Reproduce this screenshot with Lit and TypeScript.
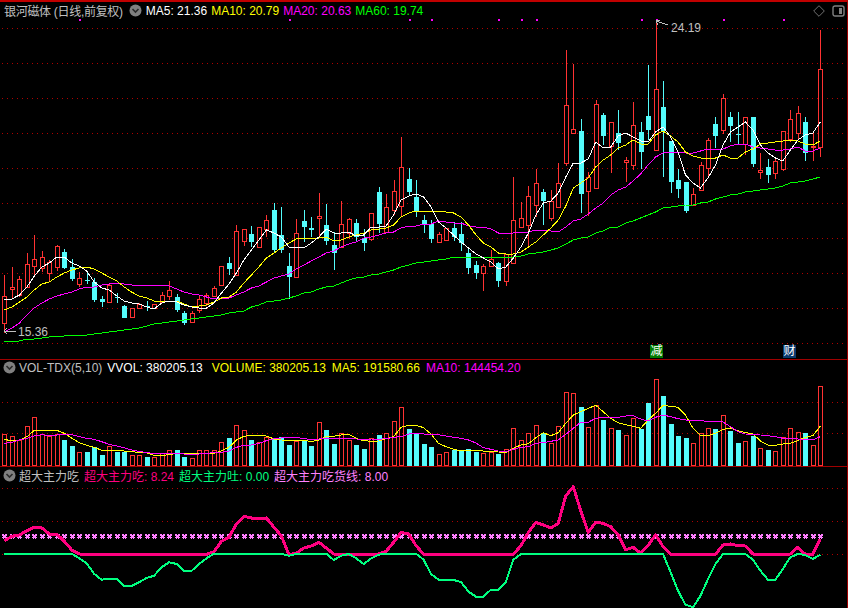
import { LitElement, html, css, svg } from 'lit';
import { customElement } from 'lit/decorators.js';

// [high, bodyTop, bodyBottom, low, up] in screen pixels
const candles: number[][] = [
  [275,296,323,333,1],[267,287,289,299,1],[276,279,295,297,1],[253,264,287,287,1],[235,259,266,277,1],
  [251,257,268,272,1],[260,262,273,282,1],[245,246,267,271,1],[249,252,268,269,0],[259,267,279,281,0],
  [272,278,284,287,1],[273,280,281,284,0],[278,282,300,302,0],[296,299,302,307,0],[284,285,302,302,1],
  [293,297,298,303,0],[305,306,318,318,0],[308,308,317,317,1],[303,304,308,309,1],[301,306,307,311,0],
  [304,304,308,309,1],[292,295,302,303,1],[281,290,296,300,1],[294,297,310,312,0],[311,313,323,325,0],
  [311,313,322,322,1],[295,299,310,313,1],[293,295,303,306,1],[286,288,296,297,1],[266,266,285,285,1],
  [257,263,269,275,0],[225,231,275,275,1],[229,229,241,246,1],[226,234,242,247,0],[227,227,247,247,1],
  [215,220,229,237,1],[203,210,250,253,0],[207,235,250,253,0],[253,266,277,299,0],[219,233,277,278,1],
  [210,221,227,242,0],[217,228,230,237,0],[193,216,218,237,1],[204,225,241,245,0],[232,245,253,270,0],
  [201,224,247,247,1],[218,219,233,239,1],[219,223,237,241,0],[229,238,243,251,0],[213,213,239,241,1],
  [187,192,224,233,0],[194,207,232,232,1],[180,191,210,215,1],[137,167,206,216,1],[168,179,192,196,0],
  [180,197,212,217,0],[215,220,224,233,0],[220,224,239,243,0],[232,234,242,243,1],[228,228,240,240,1],
  [222,228,237,241,0],[222,234,243,251,0],[248,253,268,274,0],[261,265,273,279,0],[264,266,273,291,1],
  [250,259,266,266,1],[262,263,281,287,0],[254,254,281,286,1],[177,220,263,263,1],[202,218,227,228,1],
  [186,196,225,246,1],[169,183,205,217,1],[189,192,201,225,0],[190,201,218,221,1],[163,183,207,208,1],
  [50,105,163,166,1],[64,129,133,134,1],[119,131,194,213,0],[172,177,191,216,1],[100,104,188,188,1],
  [113,115,136,145,0],[122,122,146,173,1],[110,133,143,150,0],[157,160,162,182,1],[102,125,165,170,1],
  [122,132,152,169,0],[65,116,130,140,0],[20,89,150,150,1],[81,107,131,177,0],[141,141,182,193,0],
  [169,180,189,198,0],[182,182,211,213,0],[188,194,205,205,1],[162,165,190,190,1],[138,140,168,177,1],
  [117,124,136,148,0],[94,98,130,134,1],[112,117,126,142,0],[112,134,134,145,0],[117,117,144,155,1],
  [117,117,164,167,0],[153,170,172,179,1],[159,167,175,183,0],[158,161,173,179,1],[131,131,169,171,1],
  [110,119,139,142,1],[106,113,133,140,1],[117,122,153,161,0],[133,146,147,161,1],[30,69,147,157,1],
];

const ma5 = [299,299,295,287,276,267,263,257,257,263,266,271,282,288,290,296,301,303,304,307,309,303,301,302,305,307,308,308,303,293,284,273,260,250,240,230,233,237,
  247,247,248,243,237,229,233,233,232,236,235,227,227,226,215,200,196,194,197,207,222,228,235,242,248,254,258,262,269,267,258,247,233,215,203,201,193,177,
  163,163,159,142,148,147,136,133,137,141,142,132,127,137,152,175,183,188,178,165,145,132,127,122,130,145,153,158,161,150,140,135,133,122];
const ma10 = [310,307,302,297,290,284,282,277,273,270,268,267,269,273,277,281,287,292,296,298,301,302,301,301,304,307,306,305,302,298,297,292,283,275,267,258,253,248,
  243,239,238,238,238,237,241,240,237,235,233,230,229,228,225,217,213,211,211,211,211,212,213,217,225,235,243,247,253,254,254,252,247,242,235,228,220,206,
  188,183,178,167,160,155,148,145,140,144,144,135,131,136,142,152,156,158,158,158,155,158,158,152,149,144,143,142,141,140,141,144,145,141];
const ma20 = [332,328,323,315,308,303,299,296,294,292,289,287,287,285,284,283,284,285,285,285,285,285,286,289,292,294,295,297,299,298,298,295,292,288,286,282,278,276,
  274,269,265,261,257,253,251,247,244,242,238,237,235,233,232,228,226,226,224,224,221,222,223,223,226,227,227,229,233,233,233,232,232,230,230,231,232,227,
  221,219,214,208,203,195,190,187,181,174,165,157,153,152,152,153,153,151,149,150,149,146,144,144,147,148,149,150,150,149,147,151,151,148];
const ma60 = [341,341,341,339,339,338,337,336,336,335,335,335,334,333,332,331,330,329,328,326,324,323,322,321,320,319,318,317,316,315,313,312,311,307,305,302,301,300,
  298,296,293,292,289,287,286,283,280,278,277,275,274,272,270,267,265,263,262,261,260,259,257,257,257,257,257,257,257,257,257,256,254,253,252,250,248,244,
  240,238,237,233,231,227,227,223,221,218,215,212,208,207,206,205,205,203,202,199,197,195,194,192,191,190,189,188,186,183,182,181,179,177];

// volume panel, values read from the 3x crop: y = 340 + v / 3
const vol = [282,289,300,259,232,283,288,283,300,318,337,336,320,345,319,336,336,345,345,351,351,340,331,330,351,355,331,331,331,307,294,256,270,300,307,292,296,292,315,304,300,318,246,270,312,280,300,315,327,295,285,280,243,202,267,281,
  312,321,343,337,330,333,327,336,340,335,342,328,265,301,280,256,280,310,259,157,160,201,262,196,240,265,270,286,235,267,189,118,168,252,288,294,310,280,265,267,226,273,309,304,287,325,330,334,292,265,277,279,316,139];
const volMa5 = [298,303,300,290,271,271,271,271,280,295,308,316,322,331,331,331,333,335,337,338,346,348,343,341,341,342,341,341,340,332,322,300,289,286,286,288,297,300,301,301,301,305,300,289,289,285,283,295,302,304,303,296,290,262,256,256,
  263,282,310,320,328,332,333,331,333,333,336,338,325,315,311,293,278,287,278,250,225,215,205,196,215,235,248,254,259,265,240,220,196,199,202,225,265,287,287,280,268,264,272,278,281,303,315,316,312,310,302,292,287,259];
const volMa10 = [310,307,300,295,288,284,288,285,283,284,290,295,298,305,313,318,323,330,334,338,340,340,339,341,342,342,342,340,338,337,333,322,316,315,310,302,296,294,293,293,295,300,297,295,295,296,295,297,298,297,298,296,292,290,282,280,
  282,283,284,288,292,295,300,309,323,328,333,335,328,322,320,310,308,304,300,283,265,247,247,235,232,232,232,228,227,237,243,232,225,230,236,240,242,242,244,245,246,260,275,282,283,285,287,290,295,295,297,299,300,290];

// indicator panel: y = 464 + v / 3
const flat = (n: number, v: number) => Array(n).fill(v) as number[];
const pink = [230,217,213,200,189,192,210,210,232,258,270,...flat(17,271),263,232,220,180,157,162,165,162,190,215,272,268,252,246,235,252,270,...flat(5,271),270,262,235,205,210,245,
  271,...flat(12,271),245,205,175,183,192,178,95,68,140,205,175,178,188,213,257,250,268,245,212,248,...flat(7,271),243,240,245,246,270,...flat(4,271),270,250,271,271,225];
const mint = [...flat(10,269),283,298,330,347,344,344,366,366,355,342,335,310,295,300,321,321,300,283,...flat(10,269),275,270,...flat(4,269),288,275,270,283,300,283,272,...flat(5,269),
  287,330,347,348,348,354,383,398,398,377,377,354,287,270,...flat(18,269),270,325,380,422,430,395,345,300,270,270,269,270,287,320,347,347,315,280,270,273,285,272];

const dots = [79,289,409,431,498,521,536,641,656,723,783];
const cx = (i: number) => 4.4 + 7.485 * i;
const px = (i: number) => Math.round(cx(i));

@customElement('app-root')
export class AppRoot extends LitElement {
  static styles = css`
    :host {
      display: block;
      width: 848px;
      height: 608px;
      background: #000;
      font: 12px 'Liberation Sans', 'Noto Sans CJK SC', sans-serif;
      color: #c0c0c0;
      white-space: nowrap;
    }
    .chart {
      display: flex;
      flex-direction: column;
      height: 608px;
      box-sizing: border-box;
      border-top: 2px solid #c00000;
      border-right: 1px solid #a00000;
    }
    .panel {
      position: relative;
    }
    .price { height: 357px; border-bottom: 1px solid #a00000; }
    .volume { height: 106px; border-bottom: 1px solid #a00000; }
    .indicator { flex: 1; }
    svg.plot {
      display: block;
      width: 848px;
      height: 100%;
      shape-rendering: crispEdges;
    }
    .legend {
      position: absolute;
      top: 0;
      left: 0;
      display: flex;
      align-items: center;
    }
    .price .legend { height: 17px; padding-left: 4px; gap: 4px; }
    .volume .legend { height: 15px; padding-left: 3px; gap: 6px; }
    .indicator .legend { height: 17px; padding-left: 3px; gap: 5px; }
    .legend svg { display: block; flex: none; }
    .title { letter-spacing: -0.3px; margin-right: 2px; }
    .indicator .legend svg { margin-right: -2px; }
    .volume .legend svg { margin-right: -3px; }
    .vol-name { margin-right: -1px; }
    .vvol { margin-right: 3px; }
    .white { color: #fff; }
    .yellow { color: #ffff00; }
    .magenta { color: #ff00ff; }
    .green { color: #00ff00; }
    .rose { color: #ff0080; }
    .mint { color: #00ff80; }
    .lilac { color: #ff80ff; }
    .label { fill: #c0c0c0; font-size: 12px; shape-rendering: auto; }
    .tools { position: absolute; top: 3px; right: 2px; display: flex; gap: 7px; align-items: center; }
    .tools svg { display: block; }
    .badge {
      position: absolute;
      top: 343px;
      width: 13px;
      height: 13px;
      color: #fff;
      font-size: 12px;
      line-height: 13px;
      text-align: center;
    }
    .cut { left: 650px; background: #007a00; }
    .fin { left: 783px; background: #0a3a6e; }
  `;

  private grid(ys: number[]) {
    return ys.map(y => svg`<line x1="2" x2="846" y1=${y + 0.5} y2=${y + 0.5} stroke="#b00000" stroke-dasharray="1 4" />`);
  }

  private line(values: number[], color: string, width = 1) {
    const pts = values.map((y, i) => `${cx(i).toFixed(1)},${y.toFixed(1)}`).join(' ');
    return svg`<polyline points=${pts} fill="none" stroke=${color} stroke-width=${width} stroke-linejoin="round" />`;
  }

  private candle(c: number[], i: number) {
    const [high, top, bottom, low, up] = c;
    const x = px(i);
    const h = Math.max(bottom - top, 1);
    const wick = svg`<rect x=${x} y=${high} width="1" height=${Math.max(low - high, 1)} fill=${up ? '#ff3232' : '#54fcfc'} />`;
    return up
      ? svg`${wick}<rect x=${x - 1.5} y=${top + 0.5} width="4" height=${h} fill="#000" stroke="#ff3232" />`
      : svg`${wick}<rect x=${x - 2} y=${top} width="5" height=${h} fill="#54fcfc" />`;
  }

  private bar(top: number, i: number) {
    const x = px(i);
    const y = Math.round(340 + top / 3);
    return candles[i][4]
      ? svg`<rect x=${x - 1.5} y=${y + 0.5} width="4" height=${465 - y} fill="none" stroke="#ff3232" />`
      : svg`<rect x=${x - 2} y=${y} width="5" height=${466 - y} fill="#54fcfc" />`;
  }

  private chevron() {
    return html`<svg width="13" height="13" viewBox="0 0 13 13">
      <circle cx="6.5" cy="6.5" r="6" fill="#808080" />
      <path d="M3.5 5 L6.5 8 L9.5 5" fill="none" stroke="#2a2a2a" stroke-width="1.6" />
    </svg>`;
  }

  render() {
    return html`
      <div class="chart">
        <div class="panel price">
          <svg class="plot" viewBox="0 2 848 357" preserveAspectRatio="xMinYMin">
            ${this.grid([28, 63, 98, 133, 168, 203, 238, 273, 308, 343])}
            ${dots.map(x => svg`<rect x=${x} y="19" width="2" height="2" fill="#ff00ff" />`)}
            ${candles.map((c, i) => this.candle(c, i))}
            ${this.line(ma60, '#00ff00')}
            ${this.line(ma20, '#ff00ff')}
            ${this.line(ma10, '#ffff00')}
            ${this.line(ma5, '#ffffff')}
            <path d="M656 21 L668 25 M656 21 L660 20 M656 21 L658 25" fill="none" stroke="#c0c0c0" />
            <text class="label" x="671" y="32">24.19</text>
            <path d="M4 331 L16 331 M4 331 L7 328 M4 331 L7 334" fill="none" stroke="#c0c0c0" />
            <text class="label" x="18" y="336">15.36</text>
          </svg>
          <div class="legend">
            <span class="title">银河磁体 (日线,前复权)</span>
            ${this.chevron()}
            <span class="white">MA5: 21.36</span>
            <span class="yellow">MA10: 20.79</span>
            <span class="magenta">MA20: 20.63</span>
            <span class="green">MA60: 19.74</span>
          </div>
          <div class="tools">
            <svg width="12" height="12" viewBox="0 0 12 12"><path d="M6 .7 L11.3 6 L6 11.3 L.7 6 Z" fill="none" stroke="#707070" /></svg>
            <svg width="13" height="12" viewBox="0 0 13 12">
              <rect x="1" y="1" width="11" height="10" rx="2" fill="none" stroke="#808080" stroke-width="1.4" />
              <rect x="7" y="3" width="3" height="6" fill="#808080" />
            </svg>
          </div>
          <span class="badge cut">减</span>
          <span class="badge fin">财</span>
        </div>
        <div class="panel volume">
          <svg class="plot" viewBox="0 360 848 106" preserveAspectRatio="xMinYMin">
            ${this.grid([402, 433])}
            ${vol.map((t, i) => this.bar(t, i))}
            ${this.line(volMa5.map(v => 340 + v / 3), '#ffff00')}
            ${this.line(volMa10.map(v => 340 + v / 3), '#ff00ff')}
          </svg>
          <div class="legend">
            ${this.chevron()}
            <span class="vol-name">VOL-TDX(5,10)</span>
            <span class="white vvol">VVOL: 380205.13</span>
            <span class="yellow">VOLUME: 380205.13</span>
            <span class="yellow">MA5: 191580.66</span>
            <span class="magenta">MA10: 144454.20</span>
          </div>
        </div>
        <div class="panel indicator">
          <svg class="plot" viewBox="0 467 848 141" preserveAspectRatio="xMinYMin">
            ${this.grid([488, 521, 554])}
            ${candles.map((_, i) => svg`<path d="M${px(i) - 1.5} 534.5 l4 4 m0 -4 l-4 4" stroke="#ff80ff" stroke-width="1.5" fill="none" />`)}
            ${this.line(pink.map(v => 464 + v / 3), '#ff0080', 3)}
            ${this.line(mint.map(v => 464 + v / 3), '#00ff80', 2)}
          </svg>
          <div class="legend">
            ${this.chevron()}
            <span>超大主力吃</span>
            <span class="rose">超大主力吃: 8.24</span>
            <span class="mint">超大主力吐: 0.00</span>
            <span class="lilac">超大主力吃货线: 8.00</span>
          </div>
        </div>
      </div>
    `;
  }
}
